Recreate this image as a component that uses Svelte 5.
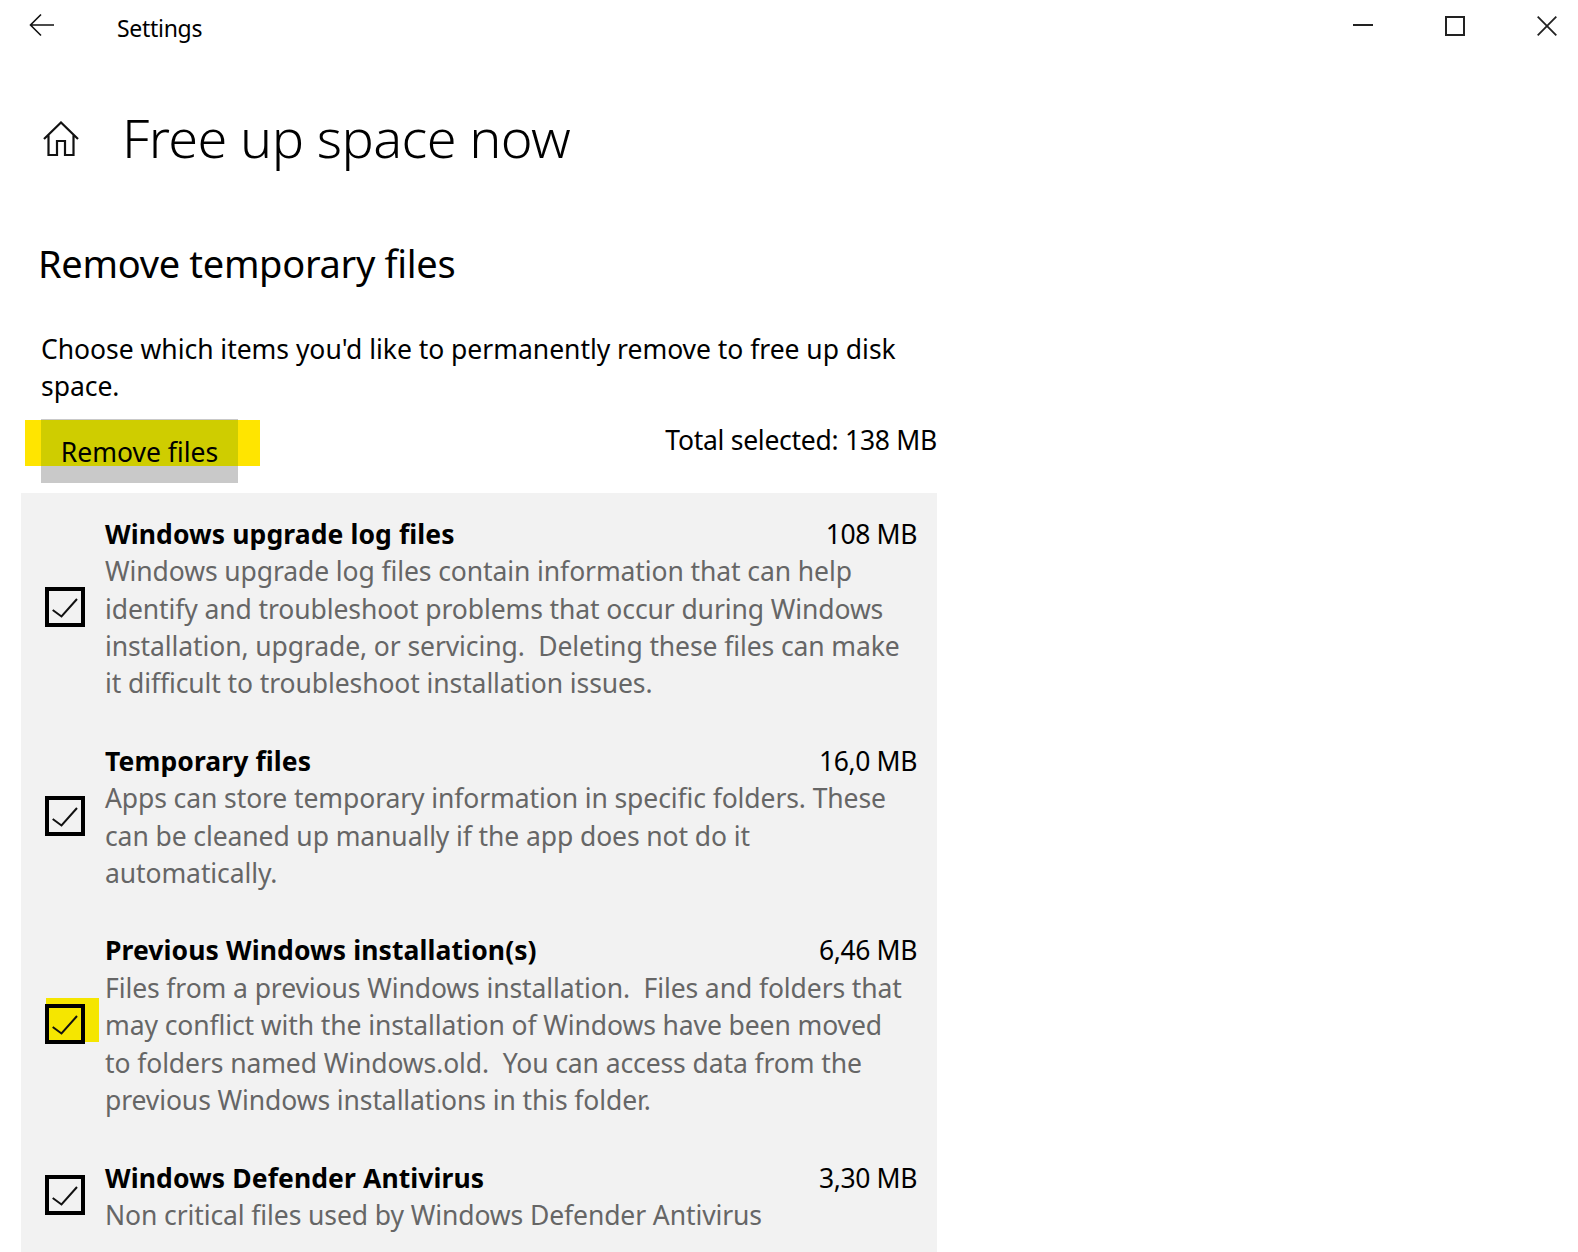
<script>
  const items = [
    {
      title: 'Windows upgrade log files',
      size: '108 MB',
      lines: [
        'Windows upgrade log files contain information that can help',
        'identify and troubleshoot problems that occur during Windows',
        'installation, upgrade, or servicing.  Deleting these files can make',
        'it difficult to troubleshoot installation issues.'
      ]
    },
    {
      title: 'Temporary files',
      size: '16,0 MB',
      lines: [
        'Apps can store temporary information in specific folders. These',
        'can be cleaned up manually if the app does not do it',
        'automatically.'
      ]
    },
    {
      title: 'Previous Windows installation(s)',
      size: '6,46 MB',
      marked: true,
      lines: [
        'Files from a previous Windows installation.  Files and folders that',
        'may conflict with the installation of Windows have been moved',
        'to folders named Windows.old.  You can access data from the',
        'previous Windows installations in this folder.'
      ]
    },
    {
      title: 'Windows Defender Antivirus',
      size: '3,30 MB',
      lines: ['Non critical files used by Windows Defender Antivirus']
    }
  ];
</script>

<div class="window">
  <header class="titlebar">
    <svg class="back" width="26" height="24" viewBox="0 0 26 24">
      <path d="M25 12H2M12 1.5 1.5 12 12 22.5" fill="none" stroke="#111" stroke-width="1.6" />
    </svg>
    <span class="app-name">Settings</span>
    <div class="controls">
      <svg width="20" height="20" viewBox="0 0 20 20"><path d="M0 9H20" stroke="#222" stroke-width="2" /></svg>
      <svg width="20" height="20" viewBox="0 0 20 20"><rect x="1" y="1" width="18" height="18" fill="none" stroke="#222" stroke-width="2" /></svg>
      <svg width="20" height="20" viewBox="0 0 20 20"><path d="M0.7 0.7 19.3 19.3M19.3 0.7 0.7 19.3" stroke="#222" stroke-width="1.8" /></svg>
    </div>
  </header>

  <div class="page-head">
    <svg width="36" height="36" viewBox="0 0 36 36">
      <path d="M1 18 18 1.5 35 18M5.5 14V34H14V20H22V34H30.5V14" fill="none" stroke="#111" stroke-width="2.2" />
    </svg>
    <h1>Free up space now</h1>
  </div>

  <h2>Remove temporary files</h2>

  <p class="intro">Choose which items you'd like to permanently remove to free up disk<br />space.</p>

  <div class="actions">
    <button class="remove">
      <span class="highlight"><span class="highlight-over"></span></span>
      <span class="remove-label">Remove files</span>
    </button>
    <span class="total">Total selected: 138 MB</span>
  </div>

  <section class="panel">
    {#each items as item}
      <div class="row">
        <div class="check-cell">
          {#if item.marked}<span class="check-mark"></span>{/if}
          <span class="checkbox">
            <svg width="32" height="32" viewBox="0 0 32 32">
              <path d="M3.7 19 12.5 25.5 28 8" fill="none" stroke="#111" stroke-width="2" />
            </svg>
          </span>
        </div>
        <div class="info">
          <div class="info-head">
            <strong>{item.title}</strong>
            <span class="size">{item.size}</span>
          </div>
          {#each item.lines as line}
            <div class="desc">{line}</div>
          {/each}
        </div>
      </div>
    {/each}
  </section>
</div>

<style>
  :global(body) {
    background: #fff;
  }

  .window {
    height: 1252px;
    overflow: hidden;
    font-family: "Noto Sans", "Open Sans", sans-serif;
    color: #000;
  }

  .titlebar {
    display: flex;
    align-items: center;
    height: 56px;
    padding-left: 29px;
    padding-right: 21px;
  }

  .back {
    margin-top: -6px;
  }

  .app-name {
    margin-left: 62px;
    font-size: 23px;
    letter-spacing: -0.3px;
  }

  .controls {
    display: flex;
    gap: 72px;
    margin-left: auto;
    margin-top: -4px;
  }

  .page-head {
    display: flex;
    align-items: center;
    gap: 43px;
    height: 64px;
    margin-top: 51px;
    padding-left: 43px;
  }

  h1 {
    margin: 0 0 5px;
    font-size: 54px;
    font-weight: 300;
    letter-spacing: -0.62px;
  }

  h2 {
    margin: 67px 0 0 38px;
    font-size: 38px;
    line-height: 50px;
    font-weight: 400;
    letter-spacing: -0.3px;
  }

  .intro {
    margin: 43px 0 0 41px;
    font-size: 26.5px;
    line-height: 37.4px;
    letter-spacing: -0.03px;
  }

  .actions {
    display: flex;
    justify-content: space-between;
    width: 896px;
    margin-left: 41px;
    margin-top: 13px;
    height: 64px;
  }

  .remove {
    position: relative;
    width: 197px;
    height: 64px;
    padding: 2px 0 0;
    border: 0;
    background: #c9c9c9;
    font: inherit;
    font-size: 26.5px;
    color: #000;
  }

  .highlight {
    position: absolute;
    left: -16px;
    right: -22px;
    top: 1px;
    height: 46px;
    background: #ffe500;
  }

  .highlight-over {
    position: absolute;
    left: 16px;
    right: 22px;
    top: 0;
    bottom: 0;
    background: #cfcd00;
  }

  .remove-label {
    position: relative;
  }

  .total {
    font-size: 26.5px;
    letter-spacing: -0.27px;
    line-height: 42px;
  }

  .panel {
    width: 916px;
    margin-left: 21px;
    margin-top: 10px;
    padding: 23px 20px 0 24px;
    box-sizing: border-box;
    background: #f2f2f2;
    display: flex;
    flex-direction: column;
    gap: 40px;
    height: 759px;
  }

  .row {
    display: flex;
    align-items: center;
  }

  .check-cell {
    position: relative;
    width: 60px;
    flex: none;
    margin-top: -4px;
  }

  .checkbox {
    position: relative;
    display: block;
    width: 40px;
    height: 40px;
    border: 4px solid #000;
    box-sizing: border-box;
  }

  .checkbox svg {
    display: block;
  }

  .check-mark {
    position: absolute;
    left: 1px;
    top: -6px;
    width: 53px;
    height: 44px;
    background: #f5e600;
  }

  .info {
    flex: 1;
    font-size: 26.5px;
    line-height: 37.4px;
  }

  .info-head {
    display: flex;
    justify-content: space-between;
  }

  .info-head strong {
    font-weight: 700;
    letter-spacing: 0.1px;
  }

  .size {
    letter-spacing: -0.4px;
  }

  .desc {
    color: #666;
    white-space: pre;
    letter-spacing: -0.1px;
  }
</style>
